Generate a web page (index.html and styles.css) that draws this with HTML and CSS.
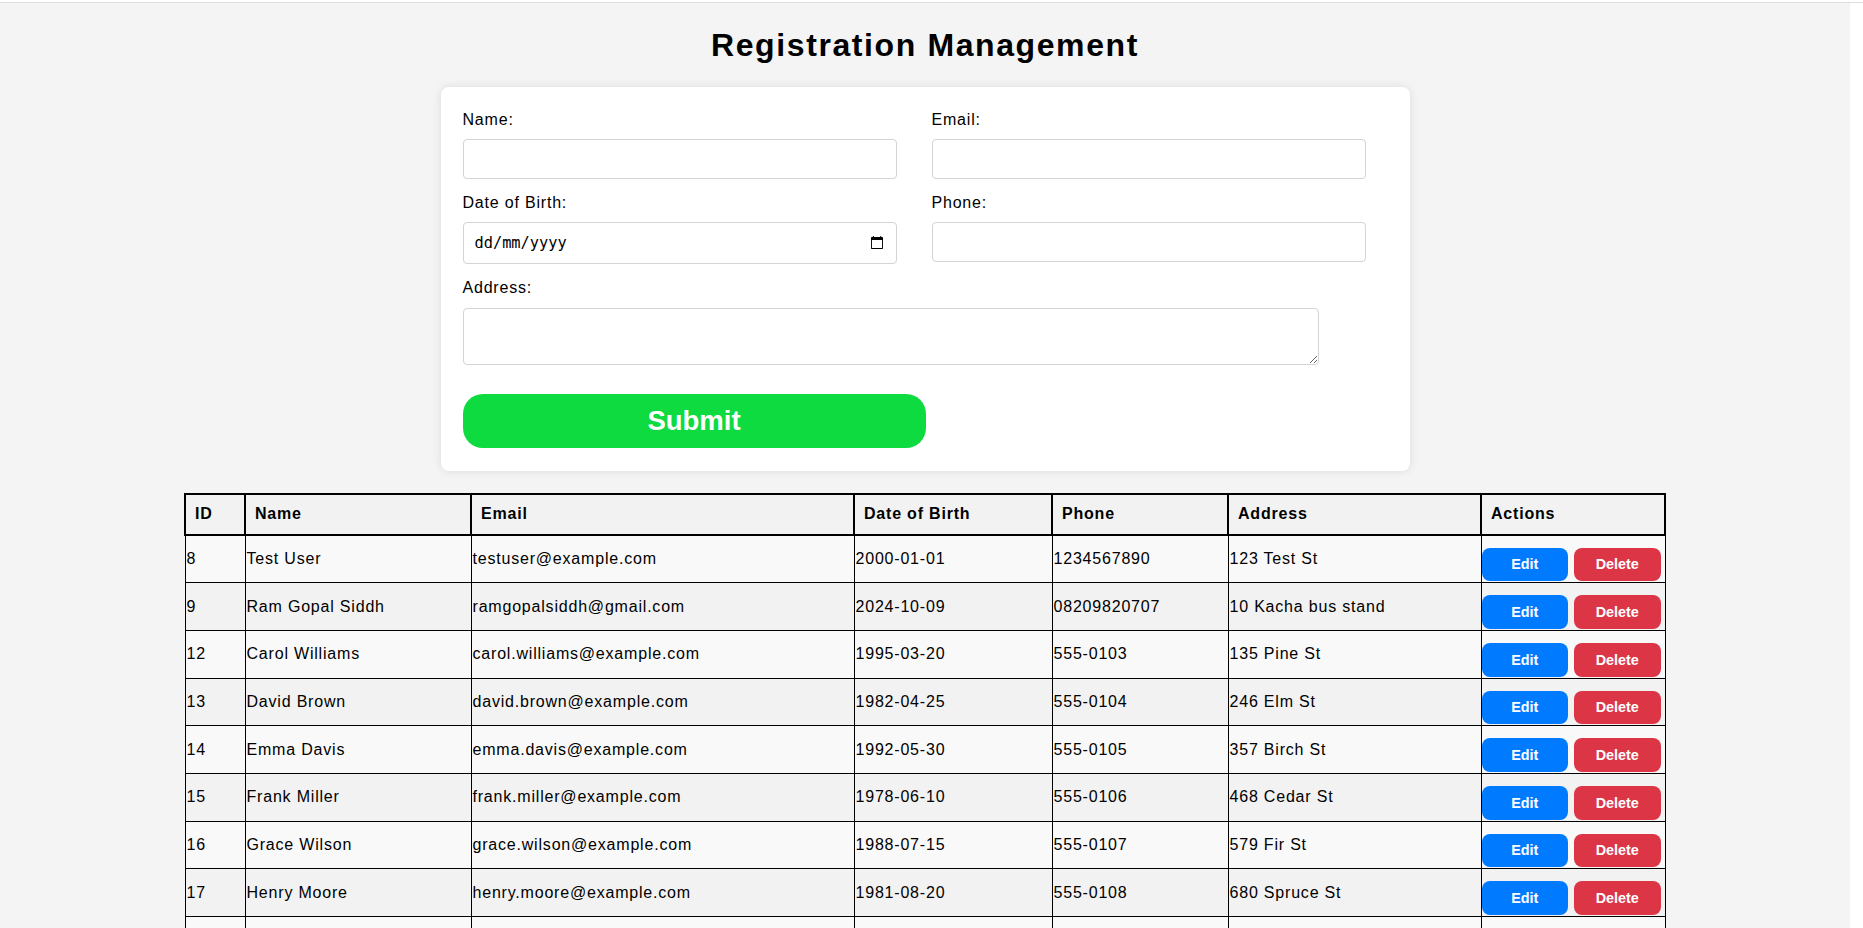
FILE: index.html
```
<!DOCTYPE html>
<html lang="en">
<head>
<meta charset="utf-8">
<title>Registration Management</title>
<link rel="stylesheet" href="styles.css">
</head>
<body>
<div class="page">
  <h1 class="title">Registration Management</h1>
  <form class="card">
    <div class="grid">
      <div class="group">
        <label class="label" for="name">Name:</label>
        <input class="field" type="text" id="name">
      </div>
      <div class="group">
        <label class="label" for="email">Email:</label>
        <input class="field" type="email" id="email">
      </div>
      <div class="group">
        <label class="label" for="dob">Date of Birth:</label>
        <div class="date-wrap">
          <input class="field date" type="text" id="dob" placeholder="dd/mm/yyyy">
          <svg class="cal" width="12" height="13" viewBox="1 1 13 13" preserveAspectRatio="none" aria-hidden="true">
            <path d="M13 2h-1V1h-1v1H4V1H3v1H2c-.55 0-1 .45-1 1v10c0 .55.45 1 1 1h11c.55 0 1-.45 1-1V3c0-.55-.45-1-1-1zm0 11H2V5h11v8z" fill="#000"/>
          </svg>
        </div>
      </div>
      <div class="group">
        <label class="label" for="phone">Phone:</label>
        <input class="field" type="text" id="phone">
      </div>
      <div class="group wide">
        <label class="label label-area" for="address">Address:</label>
        <textarea class="area" id="address"></textarea>
      </div>
    </div>
    <button class="submit" type="button">Submit</button>
  </form>

  <table class="table">
    <colgroup>
      <col class="c-id"><col class="c-name"><col class="c-email"><col class="c-dob"><col class="c-phone"><col class="c-addr"><col class="c-act">
    </colgroup>
    <thead>
      <tr><th>ID</th><th>Name</th><th>Email</th><th>Date of Birth</th><th>Phone</th><th>Address</th><th>Actions</th></tr>
    </thead>
    <tbody>
      <tr><td>8</td><td>Test User</td><td>testuser@example.com</td><td>2000-01-01</td><td>1234567890</td><td>123 Test St</td><td class="act"><div class="btns"><button class="btn edit" type="button">Edit</button><button class="btn del" type="button">Delete</button></div></td></tr>
      <tr><td>9</td><td>Ram Gopal Siddh</td><td>ramgopalsiddh@gmail.com</td><td>2024-10-09</td><td>08209820707</td><td>10 Kacha bus stand</td><td class="act"><div class="btns"><button class="btn edit" type="button">Edit</button><button class="btn del" type="button">Delete</button></div></td></tr>
      <tr><td>12</td><td>Carol Williams</td><td>carol.williams@example.com</td><td>1995-03-20</td><td>555-0103</td><td>135 Pine St</td><td class="act"><div class="btns"><button class="btn edit" type="button">Edit</button><button class="btn del" type="button">Delete</button></div></td></tr>
      <tr><td>13</td><td>David Brown</td><td>david.brown@example.com</td><td>1982-04-25</td><td>555-0104</td><td>246 Elm St</td><td class="act"><div class="btns"><button class="btn edit" type="button">Edit</button><button class="btn del" type="button">Delete</button></div></td></tr>
      <tr><td>14</td><td>Emma Davis</td><td>emma.davis@example.com</td><td>1992-05-30</td><td>555-0105</td><td>357 Birch St</td><td class="act"><div class="btns"><button class="btn edit" type="button">Edit</button><button class="btn del" type="button">Delete</button></div></td></tr>
      <tr><td>15</td><td>Frank Miller</td><td>frank.miller@example.com</td><td>1978-06-10</td><td>555-0106</td><td>468 Cedar St</td><td class="act"><div class="btns"><button class="btn edit" type="button">Edit</button><button class="btn del" type="button">Delete</button></div></td></tr>
      <tr><td>16</td><td>Grace Wilson</td><td>grace.wilson@example.com</td><td>1988-07-15</td><td>555-0107</td><td>579 Fir St</td><td class="act"><div class="btns"><button class="btn edit" type="button">Edit</button><button class="btn del" type="button">Delete</button></div></td></tr>
      <tr><td>17</td><td>Henry Moore</td><td>henry.moore@example.com</td><td>1981-08-20</td><td>555-0108</td><td>680 Spruce St</td><td class="act"><div class="btns"><button class="btn edit" type="button">Edit</button><button class="btn del" type="button">Delete</button></div></td></tr>
      <tr><td>18</td><td>Isabella Taylor</td><td>isabella.taylor@example.com</td><td>1993-09-25</td><td>555-0109</td><td>791 Walnut St</td><td class="act"><div class="btns"><button class="btn edit" type="button">Edit</button><button class="btn del" type="button">Delete</button></div></td></tr>
    </tbody>
  </table>
</div>
</body>
</html>
```
FILE: styles.css
```
html {
  background: #ffffff;
}

body {
  margin: 2px 0 0 0;
  border-top: 1px solid #dedede;
  font-family: "Liberation Sans", Arial, sans-serif;
  font-size: 16px;
  letter-spacing: 0.05em;
  color: #000;
}

.page {
  width: calc(100% - 13px);
  background: #f4f4f4;
  padding: 24px 0 40px;
  box-sizing: border-box;
}

.title {
  margin: 0 0 23px;
  text-align: center;
  font-size: 32px;
  font-weight: bold;
  letter-spacing: 0.05em;
}

.card {
  width: 969px;
  margin: 0 auto;
  box-sizing: border-box;
  padding: 24px 22px 23px;
  background: #ffffff;
  border-radius: 8px;
  box-shadow: 0 0 10px rgba(0, 0, 0, 0.1);
}

.grid {
  display: grid;
  grid-template-columns: 456px 456px;
  column-gap: 13px;
  row-gap: 15px;
}

.group {
  display: flex;
  flex-direction: column;
  align-items: flex-start;
}

.wide {
  grid-column: 1 / span 2;
}

.label {
  display: block;
  margin-bottom: 10px;
}

.label-area {
  margin-bottom: 11px;
}

.field {
  width: 434px;
  height: 40px;
  box-sizing: border-box;
  padding: 10px;
  border: 1px solid #d4d4d4;
  border-radius: 4px;
  font-size: 16px;
  background: #fff;
  margin: 0;
  display: block;
}

.date-wrap {
  position: relative;
  width: 434px;
}

.date {
  height: 42px;
  padding: 10px 10px 10px 11px;
  font-family: "DejaVu Sans Mono", "Liberation Mono", monospace;
  font-size: 15.3px;
  color: #000;
}

.date::placeholder {
  color: #000;
  opacity: 1;
}

.cal {
  position: absolute;
  right: 14px;
  top: 14px;
}

.area {
  display: block;
  width: 856px;
  height: 57px;
  box-sizing: border-box;
  padding: 10px;
  border: 1px solid #d4d4d4;
  border-radius: 4px;
  margin: 0;
  font-size: 16px;
}

.submit {
  display: block;
  margin-top: 29px;
  width: 463px;
  height: 54px;
  border: none;
  border-radius: 20px;
  background: #0ddb3f;
  color: #ffffff;
  font-family: "Liberation Sans", Arial, sans-serif;
  font-size: 27.5px;
  font-weight: bold;
  padding: 0;
}

.table {
  width: 80%;
  margin: 21.5px auto 0;
  border-collapse: collapse;
  table-layout: fixed;
}

.c-id { width: 60px; }
.c-name { width: 226px; }
.c-email { width: 383px; }
.c-dob { width: 198px; }
.c-phone { width: 176px; }
.c-addr { width: 253px; }
.c-act { width: 184px; }

.table th {
  border: 2px solid #000;
  background: #f2f2f2;
  padding: 10.5px 10px 10.5px 9px;
  text-align: left;
  font-weight: bold;
}

.table td {
  border: 1px solid #000;
  padding: 1px;
  vertical-align: middle;
  white-space: nowrap;
}

.table tbody tr:nth-child(odd) {
  background: #f9f9f9;
}

.table tbody tr:nth-child(even) {
  background: #f2f2f2;
}

.btns {
  display: flex;
  gap: 6px;
  margin-left: -1px;
  margin-top: 11px;
}

.btn {
  width: 86.5px;
  height: 33.7px;
  border: none;
  border-radius: 8px;
  color: #ffffff;
  font-family: "Liberation Sans", Arial, sans-serif;
  font-size: 14.4px;
  font-weight: bold;
  padding: 0;
}

.edit {
  background: #007bff;
}

.del {
  background: #dc3545;
}
```
